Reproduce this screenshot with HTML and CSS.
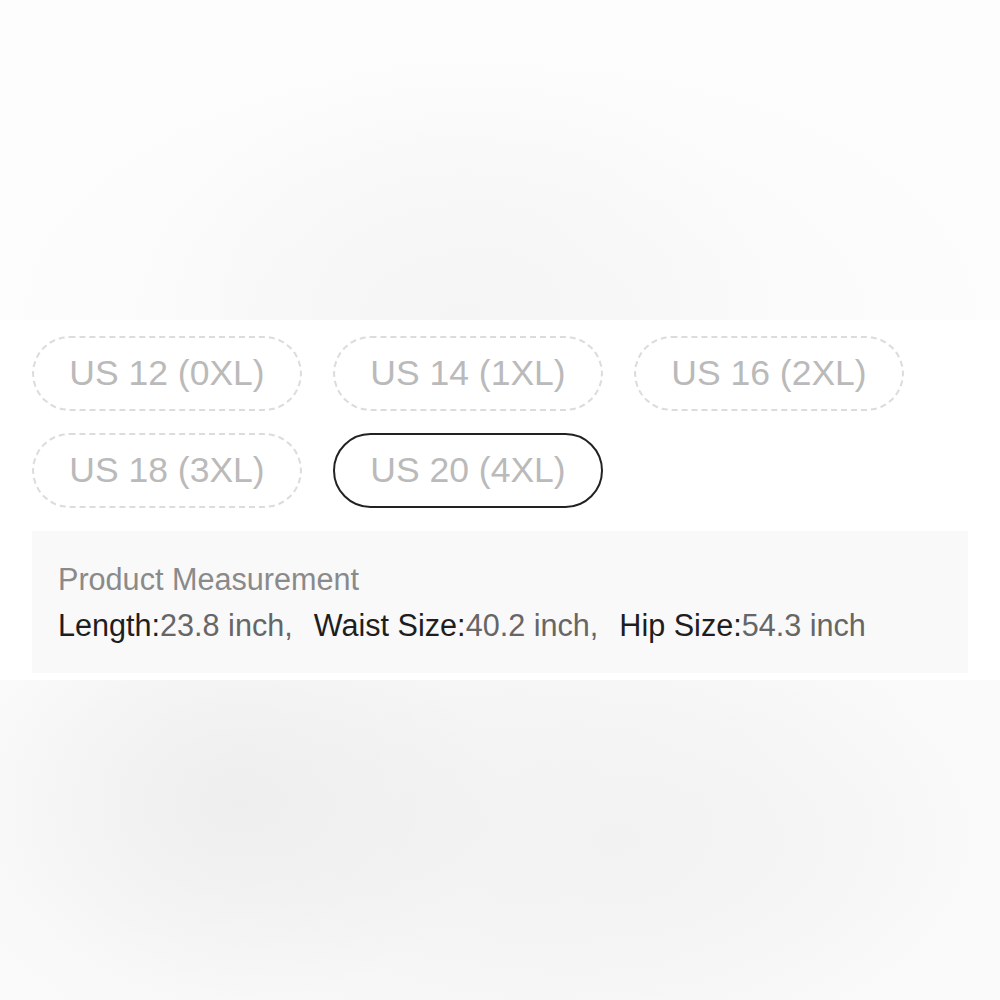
FILE: index.html
```html
<!DOCTYPE html>
<html lang="en">
<head>
<meta charset="utf-8">
<title>Size selector</title>
<link rel="stylesheet" href="styles.css">
</head>
<body>
<div class="blur blur-top"></div>
<main class="panel">
  <div class="sizes">
    <button class="size">US 12 (0XL)</button>
    <button class="size">US 14 (1XL)</button>
    <button class="size">US 16 (2XL)</button>
    <button class="size">US 18 (3XL)</button>
    <button class="size selected">US 20 (4XL)</button>
  </div>
  <div class="measure">
    <div class="measure-title">Product Measurement</div>
    <div class="measure-line">
      <span class="item"><span class="label">Length:</span><span class="value">23.8 inch,</span></span>
      <span class="item"><span class="label">Waist Size:</span><span class="value">40.2 inch,</span></span>
      <span class="item"><span class="label">Hip Size:</span><span class="value">54.3 inch</span></span>
    </div>
  </div>
</main>
<div class="blur blur-bottom"></div>
</body>
</html>
```
FILE: styles.css
```css
html, body {
  margin: 0;
  padding: 0;
  background: #ffffff;
  font-family: "Liberation Sans", Arial, sans-serif;
}

.blur {
  height: 320px;
}

.blur-top {
  background:
    radial-gradient(ellipse 320px 260px at 46% 100%, #f5f5f5 0%, rgba(246,246,246,0) 100%),
    radial-gradient(ellipse 560px 300px at 50% 100%, #f8f8f8 0%, rgba(250,250,250,0) 100%),
    #fdfdfd;
}

.blur-bottom {
  background:
    radial-gradient(ellipse 260px 200px at 24% 38%, #eeeeee 0%, rgba(239,239,239,0) 100%),
    radial-gradient(ellipse 360px 200px at 62% 50%, #f2f2f2 0%, rgba(243,243,243,0) 100%),
    radial-gradient(ellipse 560px 300px at 45% 45%, #f3f3f3 0%, rgba(248,248,248,0) 100%),
    #fafafa;
}

.panel {
  padding: 16px 32px 7px;
}

.sizes {
  display: grid;
  grid-template-columns: repeat(3, 270px);
  column-gap: 31px;
  row-gap: 22px;
}

.size {
  height: 75px;
  box-sizing: border-box;
  border: 2px dashed #dcdcdc;
  border-radius: 38px;
  background: #ffffff;
  color: #bababa;
  font-family: "Liberation Sans", Arial, sans-serif;
  font-size: 35.5px;
  padding: 0;
  display: flex;
  align-items: center;
  justify-content: center;
}

.size.selected {
  border: 2px solid #222222;
}

.measure {
  margin-top: 23px;
  background: #f9f9f9;
  padding: 28px 26px;
  font-size: 30.6px;
  line-height: 40px;
}

.measure-title {
  color: #8a8a8a;
  margin-bottom: 6px;
}

.measure-line {
  display: flex;
  gap: 21px;
}

.label {
  color: #1e1e1e;
}

.value {
  color: #666666;
}
```
